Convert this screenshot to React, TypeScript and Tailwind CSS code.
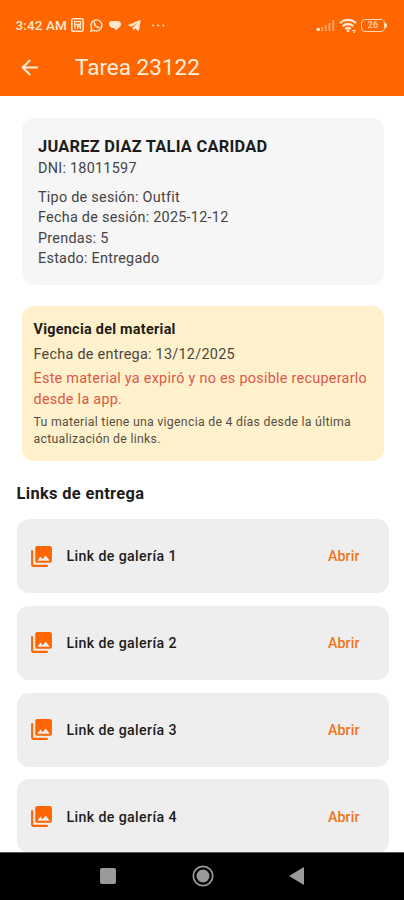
import { MdArrowBack, MdPhotoLibrary } from "react-icons/md";

const details = [
  "Tipo de sesión: Outfit",
  "Fecha de sesión: 2025-12-12",
  "Prendas: 5",
  "Estado: Entregado",
];

const links = [1, 2, 3, 4];

function StatusBar() {
  return (
    <div className="flex h-[50px] items-center pl-[15.5px] pr-[17px] text-[#ffe6cc]">
      <span className="w-[55px] whitespace-nowrap text-[13.5px] font-medium tracking-[0.1px]">3:42 AM</span>
      <svg className="h-[14px] w-[13px]" viewBox="0 0 13 14" fill="none" stroke="currentColor">
        <rect x="0.8" y="0.8" width="11.4" height="12.4" rx="1.5" strokeWidth="1.6" />
        <path d="M3.5 3.7h6v2.8h-6ZM4 6.500v4.500M6.700 6.500v4.500M6.700 8.500h2.800V11" strokeWidth="1.3" />
      </svg>
      {/* WhatsApp */}
      <svg className="ml-[6px] h-[13px] w-[13px]" viewBox="0 0 13 13" fill="none" stroke="currentColor">
        <path d="M.9 12.100l.8-2.900a5.500 5.500 0 1 1 2.200 2.100Z" strokeWidth="1.4" />
        <path d="M4.500 3.800c-.6 2 2.200 5 4.500 4.600" strokeWidth="1.700" strokeLinecap="round" />
      </svg>
      {/* Chat heart */}
      <svg className="ml-[6.5px] h-[11px] w-[12px]" viewBox="0 0 12 11" fill="currentColor">
        <path d="M3 1h5.500c2.200 0 3.500 1.200 3.500 3.200C12 6.700 9.500 7.800 7 10.600 6.300 9 5.500 8.400 4 8 1.500 7.400 0 6.200 0 4 0 2.100 1.100 1 3 1Z" />
      </svg>
      <svg className="ml-[6.5px] h-[13px] w-[13px]" viewBox="0 0 13 13" fill="currentColor">
        <path d="M12.7 1.300 11 11.500c-.1.500-.5.600-.9.300L7 9.500 5.500 11c-.3.300-.7.200-.7-.3V8.300L10 3.700 3.500 7.700.7 6.800c-.7-.2-.7-.7 0-1L12 1c.5-.2.800 0 .7.300Z" />
      </svg>
      <svg className="ml-[10px] h-[3px] w-[15px]" viewBox="0 0 15 3" fill="currentColor">
        <circle cx="2" cy="1.5" r="1" />
        <circle cx="7.2" cy="1.5" r="1" />
        <circle cx="12.4" cy="1.5" r="1" />
      </svg>

      <svg className="ml-auto h-[13px] w-[20px]" viewBox="0 0 20 13" fill="currentColor">
        <rect x="0.5" y="9" width="3.5" height="3" rx="1" />
        <g opacity="0.45">
          <rect x="5" y="8" width="2" height="4" />
          <rect x="8.7" y="6" width="2" height="6" />
          <rect x="12.4" y="4" width="2" height="8" />
          <rect x="16.2" y="1" width="2" height="11" />
        </g>
      </svg>
      <svg className="ml-[3px] h-[15px] w-[18px]" viewBox="0 0 18 15" fill="none" stroke="currentColor" strokeWidth="2.3">
        <path d="M1 5.3a11 11 0 0 1 16 0" />
        <path d="M3.7 8.3a7.3 7.3 0 0 1 10.6 0" />
        <path d="M6.3 11a3.9 3.9 0 0 1 5.4 0" />
        <circle cx="9" cy="12.9" r="1.3" fill="currentColor" stroke="none" />
        <path d="M13 12.5h4M14 14.2h2" strokeWidth="1.2" />
      </svg>
      <div className="ml-[4px] flex items-center">
        <div className="flex h-[13px] w-[24px] items-center justify-center rounded-[4px] border-[1.5px] border-[#ffd8b0] text-[9px] font-bold leading-none">
          <span className="opacity-75">26</span>
        </div>
        <div className="h-[5px] w-[2px] rounded-r-full bg-current" />
      </div>
    </div>
  );
}

function LinkRow({ n }: { n: number }) {
  return (
    <div className="flex h-[74px] shrink-0 items-center rounded-[12px] bg-[#eeeeee] pl-[12.5px] pr-[29px]">
      <MdPhotoLibrary className="h-[25px] w-[25px] text-[#ff6500]" />
      <span className="ml-[12.5px] pt-[2px] text-[14.2px] font-medium tracking-[0.37px] text-[#1c1c1c]">
        Link de galería {n}
      </span>
      <button className="ml-auto pt-[2px] text-[14.2px] font-medium tracking-[0.1px] text-[#f47216]">Abrir</button>
    </div>
  );
}

function NavBar() {
  return (
    <nav className="flex h-[48px] shrink-0 items-center border-t border-[#555] bg-black pb-[2px] text-[#9a9a9a]">
      <div className="ml-[100px] h-[16px] w-[16px] rounded-[2px] bg-current" />
      <svg className="ml-[75.5px] h-[22px] w-[22px]" viewBox="0 0 22 22" fill="none" stroke="currentColor">
        <circle cx="11" cy="11" r="9.7" strokeWidth="1.7" />
        <circle cx="11" cy="11" r="6.5" fill="currentColor" stroke="none" />
      </svg>
      <svg className="ml-[75px] h-[18px] w-[15px]" viewBox="0 0 15 18" fill="currentColor">
        <path d="M15 0v18L0 9Z" />
      </svg>
    </nav>
  );
}

export default function App() {
  return (
    <div className="flex h-[900px] w-[404px] flex-col overflow-hidden bg-white font-['Roboto',sans-serif]">
      <header className="h-[96px] shrink-0 bg-[#ff6600]">
        <StatusBar />
        <div className="flex h-[35px] items-center pl-[17px] text-[#ffeedd]">
          <MdArrowBack className="h-[25px] w-[25px]" />
          <h1 className="ml-[33px] text-[22.5px] leading-none">Tarea 23122</h1>
        </div>
      </header>

      <main className="flex min-h-0 flex-1 flex-col overflow-hidden pl-[16.5px] pr-[15.5px] pt-[22px]">
        <section className="mx-[5px] h-[167px] shrink-0 rounded-[12px] bg-[#f6f6f6] px-[16.5px] pt-[16.5px] text-[14.4px] leading-[20.6px] tracking-[0.26px] text-[#444]">
          <h2 className="text-[16.4px] font-bold leading-[24px] tracking-[0.25px] text-[#1c1c1c]">
            JUAREZ DIAZ TALIA CARIDAD
          </h2>
          <p className="mb-[8.5px]">DNI: 18011597</p>
          {details.map((line) => (
            <p key={line}>{line}</p>
          ))}
        </section>

        <section className="mx-[5px] mt-[21px] h-[154.5px] shrink-0 rounded-[12px] bg-[#fff1cc] px-[12px] pt-[13.5px] text-[14.4px] leading-[20.5px] tracking-[0.27px]">
          <h2 className="font-bold text-[#201c14]">Vigencia del material</h2>
          <p className="mt-[4.5px] text-[#4b463c]">Fecha de entrega: 13/12/2025</p>
          <p className="mt-[4px] text-[#e0574a]">
            Este material ya expiró y no es posible recuperarlo
            <br />
            desde la app.
          </p>
          <p className="mt-[4px] text-[12.3px] leading-[17.3px] tracking-[0.28px] text-[#554f43]">
            Tu material tiene una vigencia de 4 días desde la última
            <br />
            actualización de links.
          </p>
        </section>

        <h2 className="mt-[21.5px] shrink-0 text-[16.4px] font-bold leading-[24px] tracking-[0.35px] text-[#1c1c1c]">
          Links de entrega
        </h2>
        <div className="mt-[13px] flex flex-col gap-[12.8px]">
          {links.map((n) => (
            <LinkRow key={n} n={n} />
          ))}
        </div>
      </main>

      <NavBar />
    </div>
  );
}
